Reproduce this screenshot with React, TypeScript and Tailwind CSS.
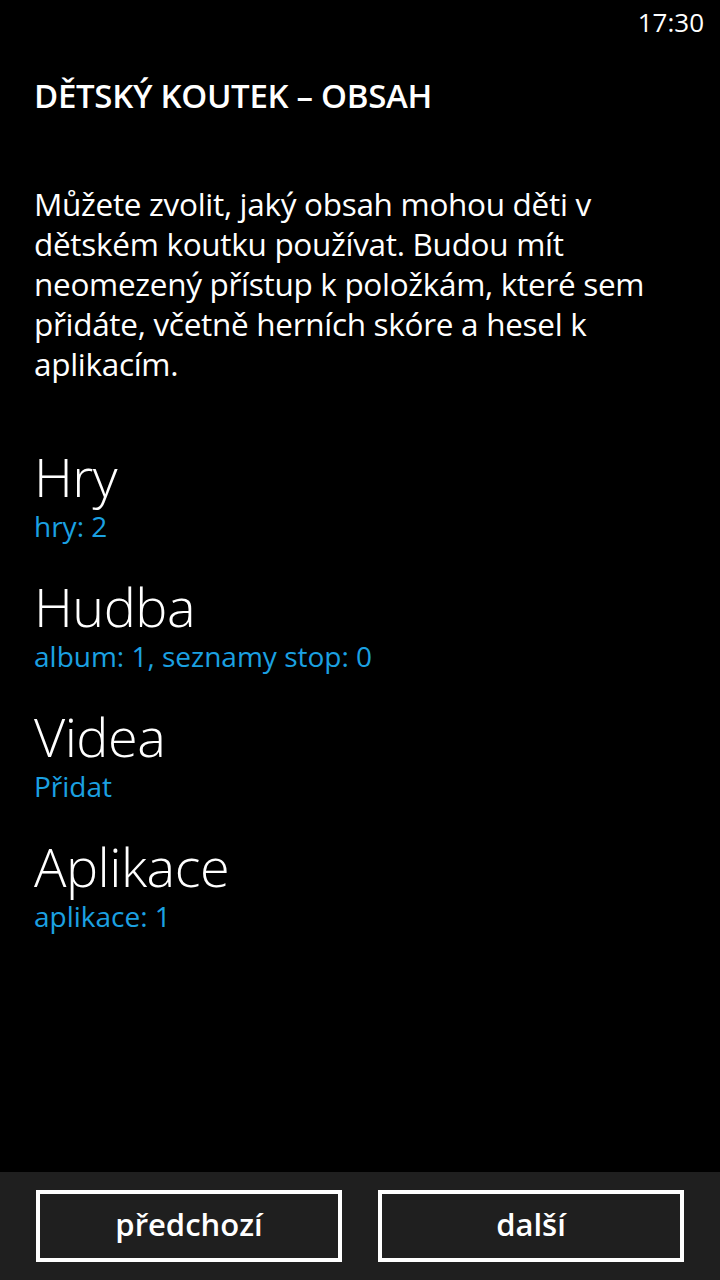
import React from 'react';

type Section = {
  title: string;
  detail: string;
};

const sections: Section[] = [
  { title: 'Hry', detail: 'hry: 2' },
  { title: 'Hudba', detail: 'album: 1, seznamy stop: 0' },
  { title: 'Videa', detail: 'Přidat' },
  { title: 'Aplikace', detail: 'aplikace: 1' },
];

const font = { fontFamily: '"Open Sans", "Noto Sans", sans-serif' };

export default function App() {
  return (
    <div className="flex h-[1280px] w-[720px] flex-col bg-black text-white" style={font}>
      <div className="flex h-[44px] items-center justify-end pr-[16px] text-[26px] leading-none">
        17:30
      </div>

      <div className="flex flex-1 flex-col px-[34px]">
        <h1 className="mt-[32px] text-[33px] font-semibold leading-[40px] tracking-[-0.3px]">
          DĚTSKÝ KOUTEK – OBSAH
        </h1>

        <p className="mt-[68px] pr-[8px] text-[31.5px] leading-[40px] tracking-[-0.3px]">
          Můžete zvolit, jaký obsah mohou děti v dětském koutku používat. Budou mít neomezený
          přístup k položkám, které sem přidáte, včetně herních skóre a hesel k aplikacím.
        </p>

        <div className="mt-[61px] flex flex-col gap-[30px]">
          {sections.map((s) => (
            <div key={s.title} className="flex flex-col">
              <span className="text-[54px] font-light leading-[62px] tracking-[-0.5px]">{s.title}</span>
              <span className="text-[28px] leading-[38px] text-[#1ba1e2]">{s.detail}</span>
            </div>
          ))}
        </div>
      </div>

      <div className="flex h-[108px] gap-[36px] bg-[#1f1f1f] px-[36px] pt-[18px]">
        <button className="flex h-[72px] flex-1 items-center justify-center border-[4px] border-white pb-[4px] text-[31px] font-semibold">
          předchozí
        </button>
        <button className="flex h-[72px] flex-1 items-center justify-center border-[4px] border-white pb-[4px] text-[31px] font-semibold">
          další
        </button>
      </div>
    </div>
  );
}
